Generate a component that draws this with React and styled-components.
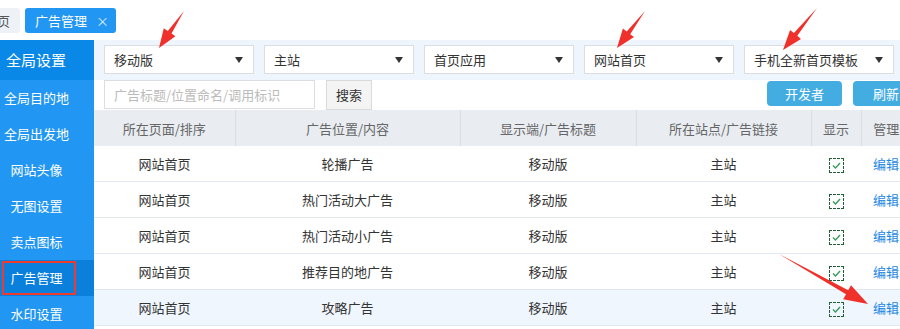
import React from "react";
import styled, { createGlobalStyle } from "styled-components";

const GlobalStyle = createGlobalStyle`
  html, body {
    margin: 0;
    padding: 0;
    background: #fff;
    font-family: "Noto Sans CJK SC", "Liberation Sans", sans-serif;
  }
  #root {
    width: 900px;
    height: 329px;
    overflow: hidden;
  }
`;

const Page = styled.div`
  position: relative;
  width: 900px;
  height: 329px;
  overflow: hidden;
  background: #fff;
`;

const TopBar = styled.div`
  height: 40px;
  box-sizing: border-box;
  padding-top: 8px;
  display: flex;
  align-items: flex-start;
  gap: 5px;
  margin-left: -26px;
`;

const Tab = styled.div`
  height: 25px;
  display: flex;
  align-items: center;
  gap: 9px;
  padding: 0 7px 0 10px;
  border-radius: 3px;
  font-size: 13px;
  background: ${p => (p.active ? "#2196f3" : "#eef1f5")};
  color: ${p => (p.active ? "#fff" : "#555")};
  padding-right: ${p => (p.active ? "7px" : "10px")};
`;

const Close = styled.span`
  font-size: 13px;
  color: rgba(255, 255, 255, 0.85);
`;

const Body = styled.div`
  display: flex;
  height: 289px;
`;

const Sidebar = styled.div`
  width: 94px;
  flex-shrink: 0;
  background: #2196f3;
`;

const SideHead = styled.div`
  height: 40px;
  line-height: 40px;
  padding-right: 22px;
  text-align: center;
  font-size: 15px;
  color: #fff;
  background: #0a88e8;
`;

const SideItem = styled.div`
  position: relative;
  height: 36px;
  line-height: 36px;
  padding-right: 21px;
  text-align: center;
  font-size: 13px;
  color: #fff;
  background: ${p => (p.active ? "#0a7fdc" : "transparent")};
  &::after {
    content: "";
    display: ${p => (p.marked ? "block" : "none")};
    position: absolute;
    left: 2px;
    top: 1px;
    width: 70px;
    height: 30px;
    border: 2px solid #ee3b30;
  }
`;

const Main = styled.div`
  flex: 1;
  min-width: 0;
  overflow: hidden;
`;

const Content = styled.div`
  width: 835px;
`;

const FilterBar = styled.div`
  height: 40px;
  box-sizing: border-box;
  padding: 5px 10px 0;
  display: flex;
  gap: 10px;
  background: #eef5fc;
`;

const Select = styled.div`
  width: 150px;
  flex-shrink: 0;
  height: 29px;
  box-sizing: border-box;
  border: 1px solid #dadde2;
  background: #fff;
  display: flex;
  align-items: center;
  justify-content: space-between;
  padding: 0 10px 0 9px;
  font-size: 13px;
  color: #333;
  &::after {
    content: "";
    border-left: 4px solid transparent;
    border-right: 4px solid transparent;
    border-top: 6px solid #333;
  }
`;

const SearchBar = styled.div`
  height: 30px;
  display: flex;
  align-items: flex-start;
  padding: 0 10px 0;
`;

const Input = styled.div`
  width: 211px;
  height: 29px;
  box-sizing: border-box;
  border: 1px solid #dadde2;
  padding-left: 9px;
  line-height: 27px;
  font-size: 13px;
  color: #bbb;
`;

const PlainButton = styled.div`
  margin-left: 11px;
  width: 46px;
  height: 30px;
  box-sizing: border-box;
  border: 1px solid #dadada;
  background: #f4f4f4;
  line-height: 28px;
  text-align: center;
  font-size: 13px;
  color: #333;
`;

const Actions = styled.div`
  margin-left: auto;
  margin-top: 1px;
  display: flex;
  gap: 11px;
`;

const BlueButton = styled.div`
  width: ${p => p.width}px;
  height: 25px;
  border-radius: 4px;
  background: #43ade2;
  color: #fff;
  font-size: 13px;
  line-height: 25px;
  text-align: center;
`;

const Table = styled.table`
  width: 817px;
  table-layout: fixed;
  border-collapse: collapse;
  font-size: 13px;
`;

const Th = styled.th`
  height: 36px;
  padding: 0;
  font-weight: normal;
  color: #666;
  background: #e9edf2;
  border-left: 1px solid #d9dee5;
  &:first-child {
    border-left: none;
  }
`;

const Tr = styled.tr`
  background: ${p => (p.hover ? "#eff6fd" : "#fff")};
  border-bottom: 1px solid #e0e9f2;
`;

const Td = styled.td`
  height: 35px;
  padding: 0;
  text-align: center;
  color: #333;
`;

const Check = styled.span`
  display: inline-flex;
  align-items: center;
  justify-content: center;
  width: 15px;
  height: 15px;
  box-sizing: border-box;
  border: 1px dashed #1f5f35;
  vertical-align: middle;
`;

const EditLink = styled.a`
  color: #1d87e4;
  text-decoration: none;
`;

const Overlay = styled.svg`
  position: absolute;
  left: 0;
  top: 0;
  pointer-events: none;
`;

const tabs = [
  { label: "首页" },
  { label: "广告管理", active: true },
];

const menu = ["全局目的地", "全局出发地", "网站头像", "无图设置", "卖点图标", "广告管理", "水印设置"];
const filters = ["移动版", "主站", "首页应用", "网站首页", "手机全新首页模板"];
const cols = [
  { title: "所在页面/排序", width: 141 },
  { title: "广告位置/内容", width: 225 },
  { title: "显示端/广告标题", width: 176 },
  { title: "所在站点/广告链接", width: 175 },
  { title: "显示", width: 50 },
  { title: "管理", width: 50 },
];
const rows = ["轮播广告", "热门活动大广告", "热门活动小广告", "推荐目的地广告", "攻略广告"];

const arrows = [
  { from: [184, 11], to: [159, 48], head: 19, wide: 14 },
  { from: [645, 11], to: [617, 48], head: 19, wide: 14 },
  { from: [817, 8], to: [783, 50], head: 20, wide: 14 },
  { from: [779, 254], to: [868, 304], head: 24, wide: 16 },
];

const arrowPoints = ({ from, to, head, wide }) => {
  const [x1, y1] = from;
  const [x2, y2] = to;
  const len = Math.hypot(x2 - x1, y2 - y1);
  const ux = (x2 - x1) / len;
  const uy = (y2 - y1) / len;
  const px = -uy;
  const py = ux;
  const bx = x2 - ux * head;
  const by = y2 - uy * head;
  const nx = x2 - ux * (head - 4);
  const ny = y2 - uy * (head - 4);
  const pts = [
    [x1, y1],
    [bx + px * 2.2, by + py * 2.2],
    [nx - ux * 4 + px * (wide / 2), ny - uy * 4 + py * (wide / 2)],
    [x2, y2],
    [nx - ux * 4 - px * (wide / 2), ny - uy * 4 - py * (wide / 2)],
    [bx - px * 2.2, by - py * 2.2],
  ];
  return pts.map(p => p.map(v => v.toFixed(1)).join(",")).join(" ");
};

const CheckMark = () => (
  <Check>
    <svg width="9" height="7" viewBox="0 0 9 7">
      <path d="M1 3.5 L3.5 6 L8 1" fill="none" stroke="#3a9a5b" strokeWidth="1.4" />
    </svg>
  </Check>
);

export default function App() {
  return (
    <Page>
      <GlobalStyle />
      <TopBar>
        {tabs.map(t => (
          <Tab key={t.label} active={t.active}>
            {t.label}
            {t.active && <Close>×</Close>}
          </Tab>
        ))}
      </TopBar>
      <Body>
        <Sidebar>
          <SideHead>全局设置</SideHead>
          {menu.map(m => (
            <SideItem key={m} active={m === "广告管理"} marked={m === "广告管理"}>
              {m}
            </SideItem>
          ))}
        </Sidebar>
        <Main>
          <Content>
            <FilterBar>
              {filters.map(f => (
                <Select key={f}>{f}</Select>
              ))}
            </FilterBar>
            <SearchBar>
              <Input>广告标题/位置命名/调用标识</Input>
              <PlainButton>搜索</PlainButton>
              <Actions>
                <BlueButton width={75}>开发者</BlueButton>
                <BlueButton width={66}>刷新</BlueButton>
              </Actions>
            </SearchBar>
            <Table>
              <colgroup>
                {cols.map(c => (
                  <col key={c.title} style={{ width: c.width }} />
                ))}
              </colgroup>
              <thead>
                <tr>
                  {cols.map(c => (
                    <Th key={c.title}>{c.title}</Th>
                  ))}
                </tr>
              </thead>
              <tbody>
                {rows.map((r, i) => (
                  <Tr key={r} hover={i === rows.length - 1}>
                    <Td>网站首页</Td>
                    <Td>{r}</Td>
                    <Td>移动版</Td>
                    <Td>主站</Td>
                    <Td>
                      <CheckMark />
                    </Td>
                    <Td>
                      <EditLink href="#">编辑</EditLink>
                    </Td>
                  </Tr>
                ))}
              </tbody>
            </Table>
          </Content>
        </Main>
      </Body>
      <Overlay width="900" height="329" viewBox="0 0 900 329">
        {arrows.map((a, i) => (
          <polygon key={i} points={arrowPoints(a)} fill="#f0302a" />
        ))}
      </Overlay>
    </Page>
  );
}
